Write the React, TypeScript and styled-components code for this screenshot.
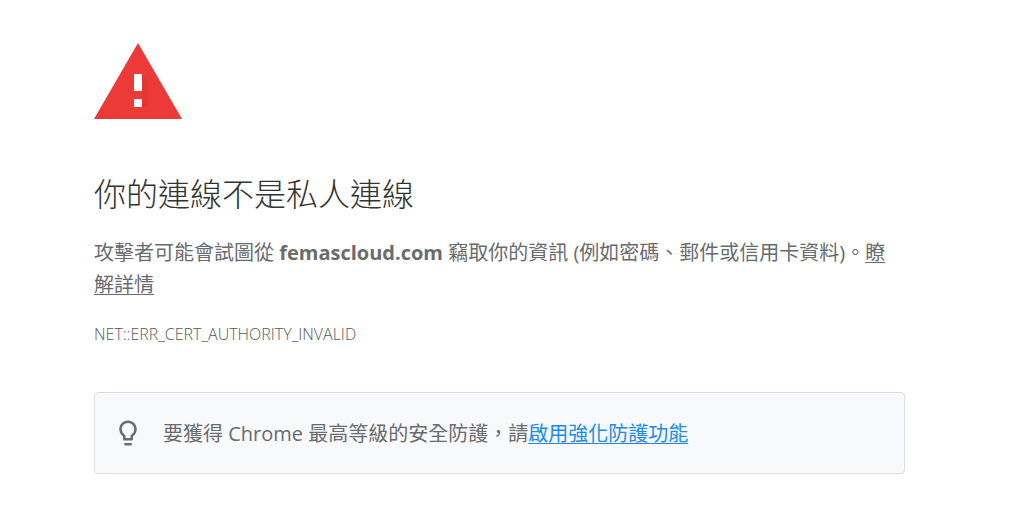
import React from "react";
import styled, { createGlobalStyle } from "styled-components";

const GlobalStyle = createGlobalStyle`
  body {
    margin: 0;
    background: #fff;
    color: #696b6e;
    font-family: "Open Sans", "Noto Sans CJK TC", sans-serif;
    font-size: 20px;
    line-height: 32px;
  }
`;

const Page = styled.main`
  box-sizing: border-box;
  width: 80%;
  max-width: 811px;
  margin-left: 94px;
  padding-top: 43px;
`;

const WarningIcon = styled.svg`
  display: block;
  width: 88px;
  height: 76px;
`;

const Title = styled.h1`
  margin: 53px 0 0;
  color: #333;
  font-size: 32px;
  font-weight: 300;
  line-height: 44px;
`;

const Message = styled.p`
  margin: 21px 0 0;
  padding-right: 8px;
`;

const DetailsLink = styled.a`
  color: inherit;
  text-decoration-thickness: 1px;
  text-underline-offset: 2px;
`;

const ErrorCode = styled.p`
  margin: 21px 0 0;
  color: #55575a;
  font-size: 16px;
  font-weight: 300;
  line-height: 24px;
`;

const Notice = styled.aside`
  box-sizing: border-box;
  display: flex;
  align-items: center;
  gap: 20px;
  margin-top: 46px;
  padding: 23px 18px;
  border: 1px solid #dadce0;
  border-radius: 4px;
  background: #f8f9fa;
`;

const BulbIcon = styled.svg`
  flex: none;
  width: 30px;
  height: 30px;
`;

const NoticeText = styled.p`
  margin: 0;
  padding-top: 2px;
`;

const EnableLink = styled.a`
  color: #1a8be8;
  text-decoration-thickness: 1px;
  text-underline-offset: 2px;
`;

export default function App() {
  return (
    <>
      <GlobalStyle />
      <Page>
        <WarningIcon viewBox="0 0 88 76" aria-hidden="true">
          <path d="M44 0 88 76H0z" fill="#eb3a37" />
          <path d="M48 31 54 38 54 64 48 64z" fill="#c9302e" opacity=".25" />
          <path d="M40 31h8v17h-8zM40 56h8v8h-8z" fill="#fff" />
        </WarningIcon>
        <Title>你的連線不是私人連線</Title>
        <Message>
          攻擊者可能會試圖從 <strong>femascloud.com</strong> 竊取你的資訊 (例如密碼、郵件或信用卡資料)。
          <DetailsLink href="#details">瞭解詳情</DetailsLink>
        </Message>
        <ErrorCode>NET::ERR_CERT_AUTHORITY_INVALID</ErrorCode>
        <Notice>
          <BulbIcon viewBox="0 0 24 24" fill="#696b6e" aria-hidden="true">
            <path d="M9 21c0 .55.45 1 1 1h4c.55 0 1-.45 1-1v-1H9v1zm3-19C8.14 2 5 5.14 5 9c0 2.38 1.19 4.47 3 5.74V17c0 .55.45 1 1 1h6c.55 0 1-.45 1-1v-2.26c1.81-1.27 3-3.36 3-5.74 0-3.86-3.14-7-7-7zm2.85 11.1-.85.6V16h-4v-2.3l-.85-.6A4.997 4.997 0 0 1 7 9c0-2.76 2.24-5 5-5s5 2.24 5 5c0 1.63-.8 3.16-2.15 4.1z" />
          </BulbIcon>
          <NoticeText>
            要獲得 Chrome 最高等級的安全防護，請<EnableLink href="#enable">啟用強化防護功能</EnableLink>
          </NoticeText>
        </Notice>
      </Page>
    </>
  );
}
